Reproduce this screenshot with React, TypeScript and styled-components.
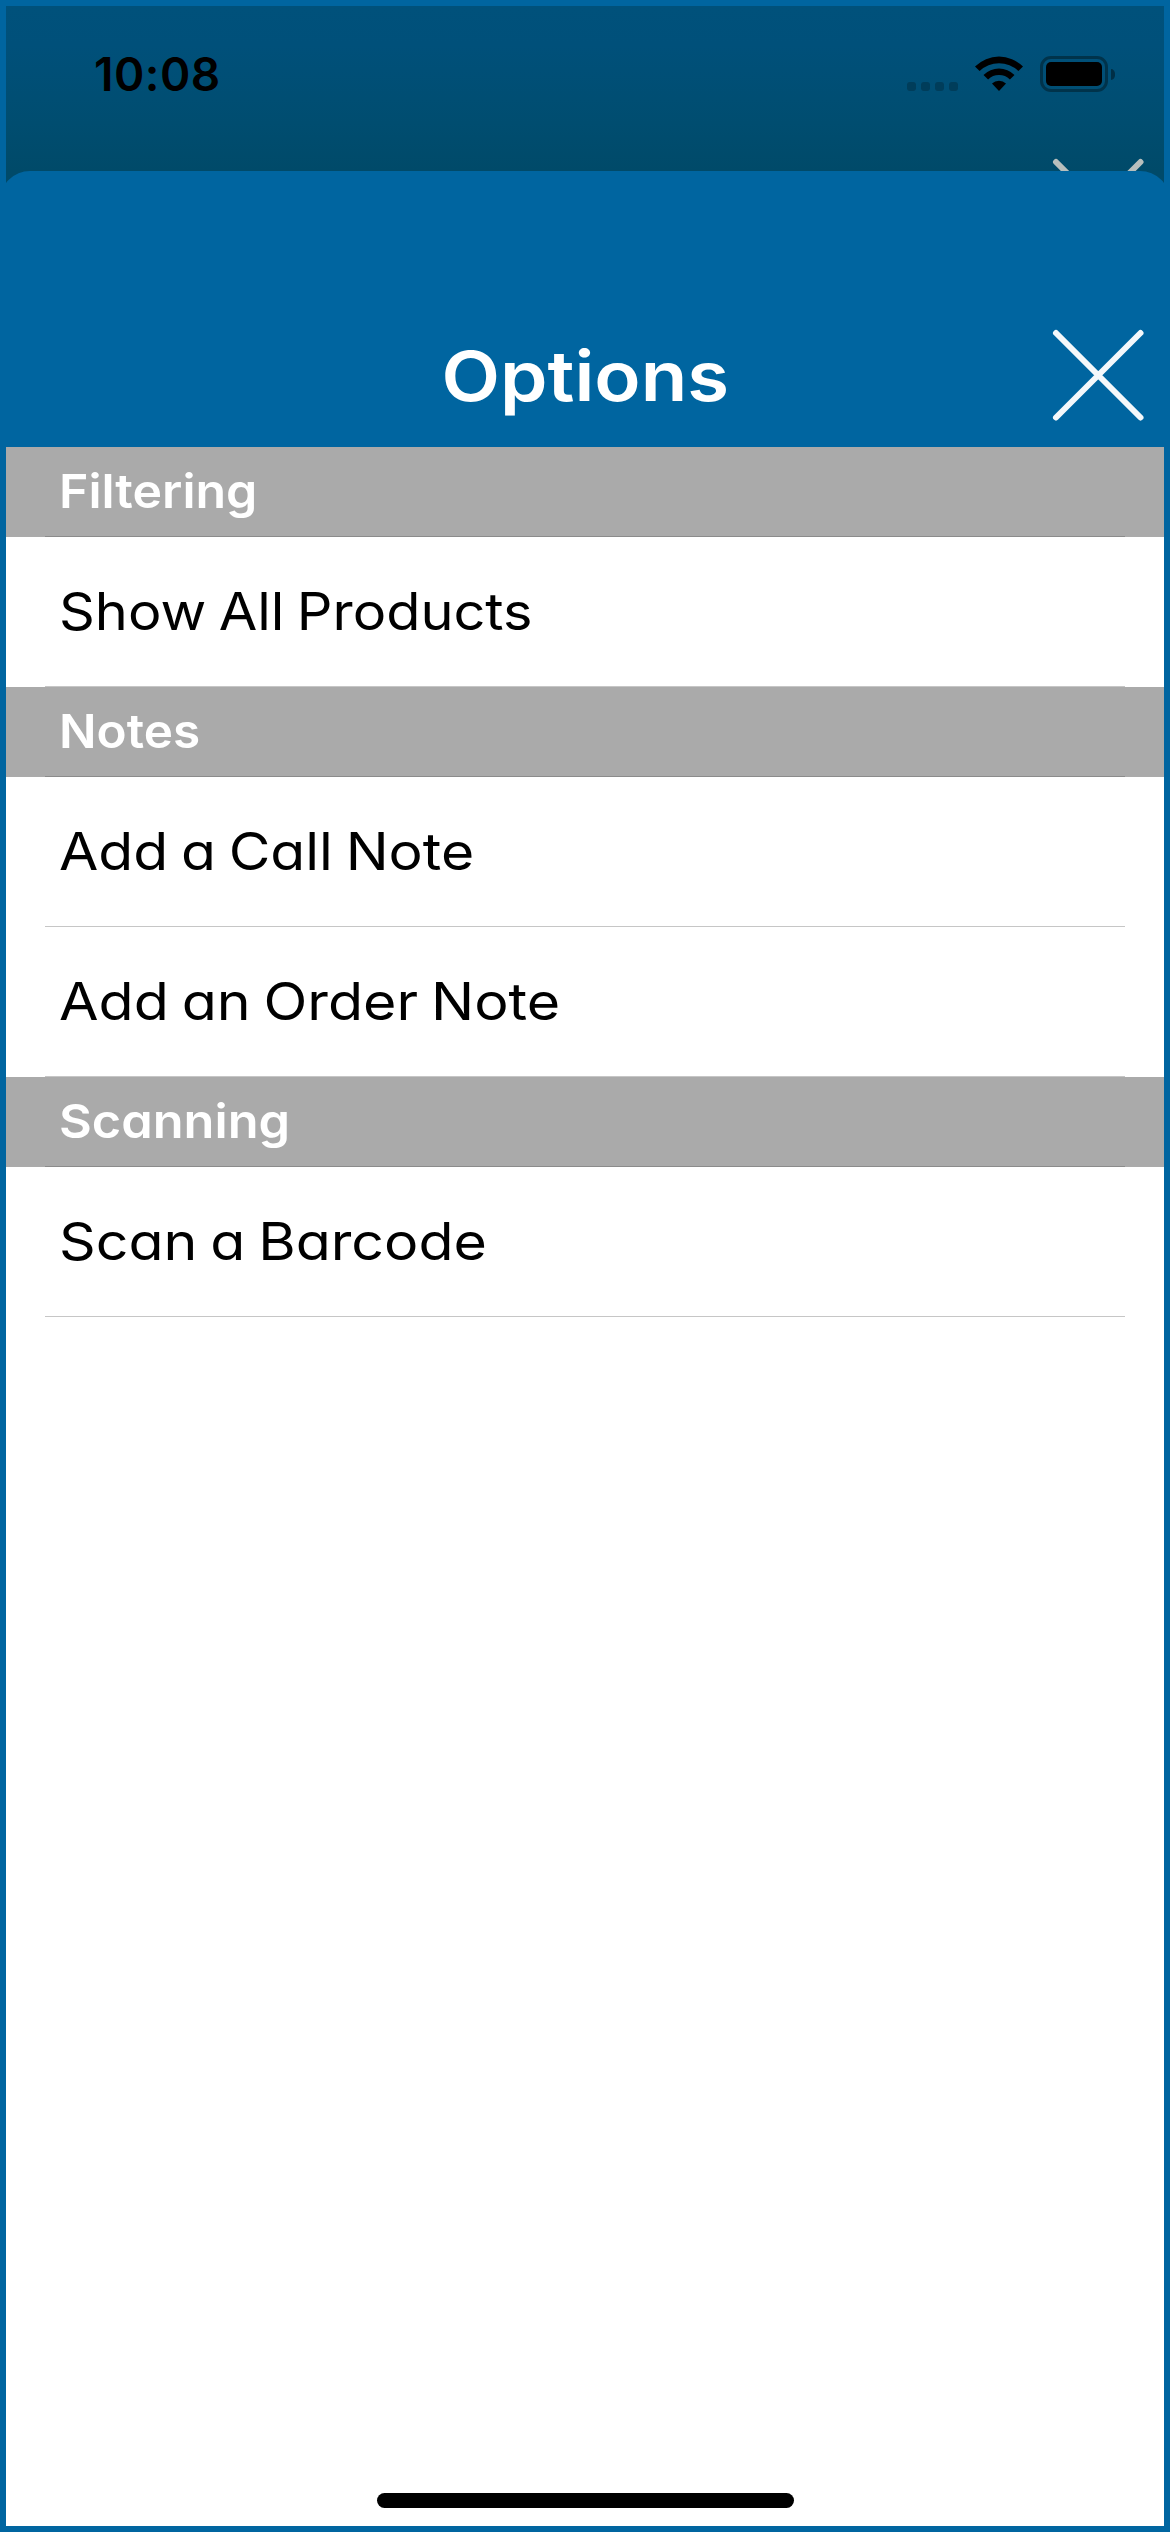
import React from "react";
import styled, { createGlobalStyle } from "styled-components";

const Global = createGlobalStyle`
  * { box-sizing: border-box; }
  body { margin: 0; background: #0065a0; font-family: Inter, "Liberation Sans", sans-serif; }
`;

const Screen = styled.div`
  display: flex;
  flex-direction: column;
  width: 1170px;
  height: 2532px;
  overflow: hidden;
  border: 6px solid #0065a0;
  background: #fff;
`;

const Backdrop = styled.div`
  flex: none;
  height: 195px;
  margin-bottom: -30px;
  background: linear-gradient(#00517b, #00507a 20%, #004d70 60%, #004a69 165px);
  overflow: hidden;
`;

const StatusBar = styled.div`
  display: flex;
  align-items: flex-start;
  justify-content: space-between;
  height: 150px;
  padding: 0 49px 0 88px;
`;

const Clock = styled.span`
  margin-top: 40px;
  font-size: 46px;
  font-weight: 600;
  line-height: 56px;
  letter-spacing: 0.5px;
  color: #000;
  white-space: nowrap;
`;

const StatusIcons = styled.div`
  display: flex;
  align-items: flex-start;
  padding-top: 49px;
`;

const SignalDots = styled.div`
  display: flex;
  gap: 5px;
  margin: 27px 17px 0 0;
`;

const Dot = styled.i`
  width: 9px;
  height: 9px;
  border-radius: 3px;
  background: #003d5a;
`;

const Wifi = styled.svg`
  width: 48px;
  height: 36px;
  margin-right: 17px;
`;

const Battery = styled.div`
  display: flex;
  width: 68px;
  height: 36px;
  margin-top: 1px;
  padding: 3px;
  border: 3px solid #00334b;
  border-radius: 11px;
`;

const Charge = styled.div`
  flex: 1;
  border-radius: 5px;
  background: #000;
`;

const Terminal = styled.div`
  width: 4px;
  height: 11px;
  margin: 14px 0 0 3px;
  border-radius: 0 5px 5px 0 / 0 6px 6px 0;
  background: #002f46;
`;

const Cross = styled.svg<{ $color: string }>`
  display: block;
  width: 96px;
  height: 96px;
  stroke: ${(p) => p.$color};
  stroke-width: 6px;
  stroke-linecap: round;
`;

const BackRow = styled.div`
  display: flex;
  justify-content: flex-end;
  padding-right: 18px;
`;

const Sheet = styled.main`
  display: flex;
  flex: 1;
  flex-direction: column;
`;

const SheetHeader = styled.header`
  display: grid;
  grid-template-columns: 1fr auto 1fr;
  align-items: end;
  height: 276px;
  margin: 0 -6px;
  padding: 0 24px 24px;
  border-radius: 30px 30px 0 0;
  background: #0065a0;
`;

const Title = styled.h1`
  grid-column: 2;
  margin: 0;
  font-size: 69px;
  font-weight: 600;
  line-height: 94px;
  color: #fff;
  transform: scaleX(1.104);
`;

const CloseButton = styled.button`
  justify-self: end;
  padding: 0;
  border: 0;
  background: none;
`;

const SectionHeader = styled.h2`
  height: 90px;
  margin: 0;
  padding-left: 53px;
  font-size: 47px;
  font-weight: 600;
  line-height: 88px;
  color: #fff;
  background: linear-gradient(#8b8b8b, #8b8b8b) 39px 89px / 1080px 1px no-repeat #aaa;
  font-feature-settings: "cv11";
`;

const Row = styled.div`
  height: 150px;
  padding-left: 53px;
  font-size: 52px;
  line-height: 150px;
  word-spacing: -3px;
  color: #000;
  background: linear-gradient(#c6c6c6, #c6c6c6) 39px 149px / 1080px 1px no-repeat #fff;
  font-feature-settings: "cv11";
`;

const Label = styled.span<{ $stretch: number }>`
  display: inline-block;
  transform: scaleX(${(p) => p.$stretch});
  transform-origin: left;
  white-space: nowrap;
`;

const HomeIndicator = styled.div`
  width: 417px;
  height: 15px;
  margin: auto auto 18px 371px;
  border-radius: 8px;
  background: #000;
`;

const CrossIcon = ({ color }: { color: string }) => (
  <Cross $color={color} viewBox="0 0 96 96">
    <path d="M6 6 90.5 90.5M90.5 6 6 90.5" />
  </Cross>
);

const sections = [
  {
    title: "Filtering",
    stretch: 1.064,
    rows: [{ text: "Show All Products", stretch: 1.075 }],
  },
  {
    title: "Notes",
    stretch: 1.053,
    rows: [
      { text: "Add a Call Note", stretch: 1.097 },
      { text: "Add an Order Note", stretch: 1.103 },
    ],
  },
  {
    title: "Scanning",
    stretch: 1.074,
    rows: [{ text: "Scan a Barcode", stretch: 1.102 }],
  },
];

export default function App() {
  return (
    <>
      <Global />
      <Screen>
        <Backdrop>
          <StatusBar>
            <Clock>10:08</Clock>
            <StatusIcons>
              <SignalDots>
                <Dot />
                <Dot />
                <Dot />
                <Dot />
              </SignalDots>
              <Wifi viewBox="0 0 48 36">
                <path d="M0 11.500a34 34 0 0 1 48 0l-4.600 4.500a28 28 0 0 0-38.800 0Z" />
                <path d="M8.500 20a22 22 0 0 1 31 0l-4.600 4.500a15.500 15.500 0 0 0-21.800 0Z" />
                <path d="M17 28.500a10 10 0 0 1 14 0L24 36Z" />
              </Wifi>
              <Battery>
                <Charge />
              </Battery>
              <Terminal />
            </StatusIcons>
          </StatusBar>
          <BackRow>
            <CrossIcon color="#b8bfbd" />
          </BackRow>
        </Backdrop>
        <Sheet>
          <SheetHeader>
            <Title>Options</Title>
            <CloseButton aria-label="Close">
              <CrossIcon color="#f4f8fb" />
            </CloseButton>
          </SheetHeader>
          {sections.map((s) => (
            <section key={s.title}>
              <SectionHeader>
                <Label $stretch={s.stretch}>{s.title}</Label>
              </SectionHeader>
              {s.rows.map((r) => (
                <Row key={r.text}>
                  <Label $stretch={r.stretch}>{r.text}</Label>
                </Row>
              ))}
            </section>
          ))}
          <HomeIndicator />
        </Sheet>
      </Screen>
    </>
  );
}
